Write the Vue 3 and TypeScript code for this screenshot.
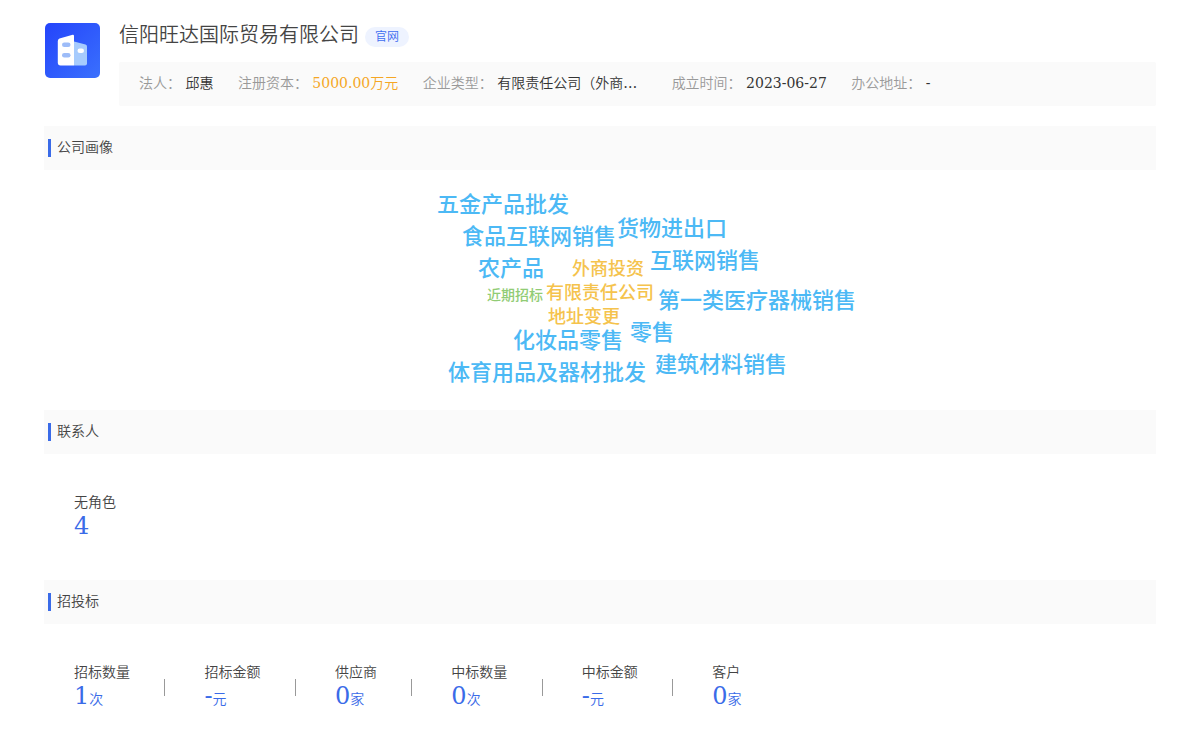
<script setup lang="ts">
interface Field {
  label: string
  value: string
  kind?: 'money' | 'wide'
}
interface Word {
  text: string
  x: number
  y: number
  size: 'large' | 'medium' | 'small'
}
interface Stat {
  label: string
  value: string
  unit: string
}

const fields: Field[] = [
  { label: '法人：', value: '邱惠' },
  { label: '注册资本：', value: '5000.00万元', kind: 'money' },
  { label: '企业类型：', value: '有限责任公司（外商…', kind: 'wide' },
  { label: '成立时间：', value: '2023-06-27' },
  { label: '办公地址：', value: '-' },
]

// x is the left edge and y the vertical centre of a word on the 600px wide canvas
const words: Word[] = [
  { text: '五金产品批发', x: 137, y: 32, size: 'large' },
  { text: '货物进出口', x: 317, y: 56, size: 'large' },
  { text: '食品互联网销售', x: 162, y: 64, size: 'large' },
  { text: '互联网销售', x: 350, y: 88, size: 'large' },
  { text: '农产品', x: 178, y: 96, size: 'large' },
  { text: '外商投资', x: 272, y: 97, size: 'medium' },
  { text: '有限责任公司', x: 246, y: 121, size: 'medium' },
  { text: '近期招标', x: 187, y: 124, size: 'small' },
  { text: '第一类医疗器械销售', x: 358, y: 128, size: 'large' },
  { text: '地址变更', x: 248, y: 145, size: 'medium' },
  { text: '零售', x: 330, y: 160, size: 'large' },
  { text: '化妆品零售', x: 213, y: 168, size: 'large' },
  { text: '建筑材料销售', x: 355, y: 192, size: 'large' },
  { text: '体育用品及器材批发', x: 148, y: 200, size: 'large' },
]

const contacts: Stat[] = [{ label: '无角色', value: '4', unit: '' }]

const bids: Stat[] = [
  { label: '招标数量', value: '1', unit: '次' },
  { label: '招标金额', value: '-', unit: '元' },
  { label: '供应商', value: '0', unit: '家' },
  { label: '中标数量', value: '0', unit: '次' },
  { label: '中标金额', value: '-', unit: '元' },
  { label: '客户', value: '0', unit: '家' },
]
</script>

<template>
  <main class="page" lang="zh-CN">
    <header class="company">
      <svg class="logo" viewBox="0 0 55 55" aria-hidden="true">
        <defs>
          <linearGradient id="logo-bg" x1="0" y1="0" x2="1" y2="1">
            <stop offset="0" stop-color="#2444fb" />
            <stop offset="1" stop-color="#3a70fd" />
          </linearGradient>
        </defs>
        <rect width="55" height="55" rx="5" fill="url(#logo-bg)" />
        <path d="M29 18.500 L40.500 21.500 Q42 22 42 23.500 V40.500 Q42 42.500 40 42.500 H29 Z" fill="#a6cbfd" />
        <path d="M14.500 15.500 L27.700 11.700 Q29 11.500 29 13 V42.500 H15.500 Q12.800 42.500 12.800 39.500 V18 Q12.800 16.100 14.500 15.500 Z" fill="#fff" />
        <rect x="17" y="19.500" width="8.500" height="4.500" rx="2.250" fill="#9dbcf8" />
        <rect x="17" y="30" width="8.500" height="4.500" rx="2.250" fill="#9dbcf8" />
        <rect x="32.500" y="25.500" width="6.500" height="4.500" rx="2.250" fill="#fff" />
      </svg>
      <div class="summary">
        <div class="heading">
          <h1 class="name">信阳旺达国际贸易有限公司</h1>
          <a class="site" href="#">官网</a>
        </div>
        <div class="fields">
          <template v-for="f in fields" :key="f.label"><span class="field"><span class="field-label">{{ f.label }}</span> <span class="field-value" :class="f.kind">{{ f.value }}</span></span>{{ ' ' }}</template>
        </div>
      </div>
    </header>

    <section>
      <h2 class="title">公司画像</h2>
      <div class="cloud">
        <span
          v-for="w in words"
          :key="w.text"
          class="word"
          :class="w.size"
          :style="{ left: w.x + 'px', top: w.y + 'px' }"
        >{{ w.text }}</span>
      </div>
    </section>

    <section>
      <h2 class="title">联系人</h2>
      <ul class="stats">
        <li v-for="s in contacts" :key="s.label">
          <div class="stat">
            <div class="stat-label">{{ s.label }}</div>
            <div class="stat-value">{{ s.value }}</div>
          </div>
        </li>
      </ul>
    </section>

    <section>
      <h2 class="title">招投标</h2>
      <ul class="stats">
        <li v-for="(s, i) in bids" :key="s.label">
          <div class="stat">
            <div class="stat-label">{{ s.label }}</div>
            <div class="stat-value">{{ s.value }}<span class="unit">{{ s.unit }}</span></div>
          </div> <span v-if="i < bids.length - 1" class="divider"></span>
        </li>
      </ul>
    </section>
  </main>
</template>

<style>
body {
  margin: 0;
  background: #fff;
}
</style>

<style scoped>
.page {
  padding: 22px 44px 0;
  font-family: "DejaVu Serif", "Noto Sans CJK SC", serif;
  font-size: 14px;
  font-weight: 350;
  line-height: 20px;
  color: #444;
}
.company {
  display: flex;
  gap: 19px;
  margin-bottom: 20px;
}
.logo {
  flex: none;
  width: 55px;
  height: 55px;
  margin: 1px 0 0 1px;
}
.summary {
  flex: 1;
  min-width: 0;
}
.heading {
  display: flex;
  align-items: center;
  gap: 6px;
  height: 26px;
  margin-bottom: 14px;
}
.name {
  margin: 0;
  font-size: 20px;
  font-weight: 350;
  line-height: 24px;
}
.site {
  margin-top: 4px;
  padding: 0 10px;
  border-radius: 10px;
  background: #eef3ff;
  color: #3c6cf0;
  font-size: 12px;
  line-height: 20px;
  text-decoration: none;
}
.fields {
  padding: 11px 20px 13px;
  border-radius: 2px;
  background: #fafafa;
  white-space: nowrap;
  overflow: hidden;
}
.field {
  display: inline-block;
  vertical-align: top;
  margin-right: 20px;
}
.field-label {
  color: #999;
}
.field-value {
  display: inline-block;
  vertical-align: top;
  color: #333;
}
.field-value.money {
  color: #f5a623;
}
.wide {
  width: 150px;
}
.title {
  display: flex;
  align-items: flex-end;
  gap: 6px;
  margin: 0;
  padding: 11px 4px 13px;
  background: #fafafa;
  font-size: 14px;
  font-weight: 350;
  line-height: 20px;
}
.title::before {
  content: "";
  width: 3px;
  height: 18px;
  background: #3a6be8;
}
.cloud {
  position: relative;
  width: 600px;
  height: 240px;
  margin: 0 auto;
  font-family: "Noto Sans CJK SC", sans-serif;
  font-weight: 500;
}
.word {
  position: absolute;
  transform: translateY(-50%);
  white-space: nowrap;
}
.large {
  font-size: 22px;
  line-height: 24px;
  color: #4cb9f5;
}
.medium {
  font-size: 18px;
  line-height: 20px;
  color: #f5c34d;
}
.small {
  font-size: 14px;
  line-height: 16px;
  color: #91cc75;
}
.stats {
  display: flex;
  margin: 0;
  padding: 38px 30px 40px;
  list-style: none;
  white-space: nowrap;
}
.stat {
  display: inline-block;
  vertical-align: top;
  margin-right: 30px;
}
.stat-value {
  color: #3a6be8;
  font-size: 24px;
  line-height: 28px;
}
.unit {
  font-size: 14px;
}
.divider {
  display: inline-block;
  vertical-align: top;
  width: 1px;
  height: 17px;
  margin: 17px 39px 0 0;
  background: #999;
}
</style>
